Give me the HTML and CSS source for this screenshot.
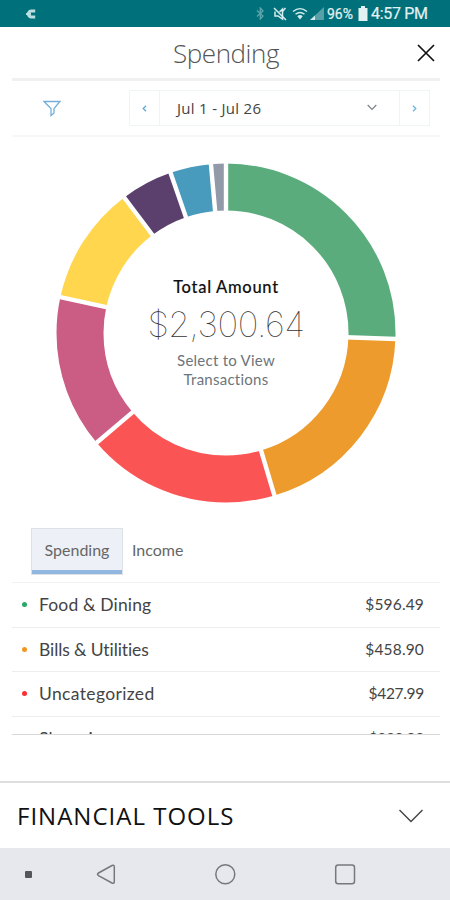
FILE: index.html
```html
<!DOCTYPE html>
<html lang="en">
<head>
<meta charset="utf-8">
<title>Spending</title>
<link rel="stylesheet" href="styles.css">
</head>
<body>
<div class="status">
  <svg class="carrier" width="12" height="12" viewBox="0 0 12 12"><path d="M10.200 3H6.500A3 3 0 0 0 6.500 9H10.200" fill="none" stroke="#b9dde0" stroke-width="3.200"/><path d="M1 6h5" stroke="#b9dde0" stroke-width="2"/></svg>
  <div class="indicators">
    <svg class="bt" width="9" height="13" viewBox="0 0 9 13"><path d="M1 3.5 7 9 4.3 12V1L7 4 1 9.5" fill="none" stroke="#5fa6ac" stroke-width="1.3"/></svg>
    <svg class="mute" width="14" height="14" viewBox="0 0 14 14"><path d="M2 4.500V9h3l4.500 3V2L6.500 5" fill="none" stroke="#d5ebed" stroke-width="1.500"/><path d="M1 1l12 12M12.500 1 9 5" stroke="#d5ebed" stroke-width="1.500"/></svg>
    <svg class="wifi" width="16" height="13" viewBox="0 0 16 13"><path d="M1 4.5Q8-1.2 15 4.5M3.5 7.3Q8 3.6 12.5 7.3" fill="none" stroke="#d5ebed" stroke-width="1.4"/><path d="M5.3 9.2Q8 7 10.700 9.200L8 12.500z" fill="#d5ebed"/></svg>
    <svg class="signal" width="14" height="13" viewBox="0 0 14 13"><path d="M0 13 14 0v13z" fill="#58a0a7"/><path d="M0 13 5 8.400V13z" fill="#d5ebed"/></svg>
    <span class="percent">96%</span>
    <svg class="battery" width="10" height="15" viewBox="0 0 10 15"><path d="M3 0h4v2h2.500v13h-9V2H3z" fill="#e2f1f2"/></svg>
    <span class="clock">4:57 PM</span>
  </div>
</div>
<header class="header">
  <h1>Spending</h1>
  <svg class="close" width="18" height="18" viewBox="0 0 18 18"><path d="M1 1 17 17M17 1 1 17" stroke="#111" stroke-width="1.7"/></svg>
</header>
<section class="filters">
  <svg class="funnel" width="18" height="17" viewBox="0 0 18 17"><path d="M1 1.500h16L11 8.500V13L8 15.500V8.500z" fill="none" stroke="#75afd9" stroke-width="1.300"/></svg>
  <div class="range">
    <div class="step"><svg width="5" height="7" viewBox="0 0 5 7"><path d="M4 .7 1.200 3.500 4 6.300" fill="none" stroke="#62a9da" stroke-width="1.300"/></svg></div>
    <div class="period"><span>Jul 1 - Jul 26</span><svg width="10" height="7" viewBox="0 0 10 7"><path d="M.7 1 5 5.500 9.300 1" fill="none" stroke="#7d8388" stroke-width="1.200"/></svg></div>
    <div class="step"><svg width="5" height="7" viewBox="0 0 5 7"><path d="M1 .7 3.800 3.500 1 6.300" fill="none" stroke="#6bb4dc" stroke-width="1.300"/></svg></div>
  </div>
</section>
<section class="chart">
  <svg class="donut" width="340" height="340" viewBox="-170 -170 340 340">
    <g class="slices" transform="rotate(-90)">
      <circle r="146" pathLength="360" stroke="#5aac7c" stroke-dasharray="92 268"/>
      <circle r="146" pathLength="360" stroke="#ed9b2d" stroke-dasharray="71.4 288.6" stroke-dashoffset="-92"/>
      <circle r="146" pathLength="360" stroke="#fb5455" stroke-dasharray="66.3 293.7" stroke-dashoffset="-163.4"/>
      <circle r="146" pathLength="360" stroke="#cb5c84" stroke-dasharray="52.5 307.5" stroke-dashoffset="-229.7"/>
      <circle r="146" pathLength="360" stroke="#ffd64d" stroke-dasharray="40.9 319.1" stroke-dashoffset="-282.2"/>
      <circle r="146" pathLength="360" stroke="#5b406d" stroke-dasharray="17.8 342.2" stroke-dashoffset="-323.1"/>
      <circle r="146" pathLength="360" stroke="#489bbc" stroke-dasharray="14 346" stroke-dashoffset="-340.9"/>
      <circle r="146" pathLength="360" stroke="#9299a8" stroke-dasharray="5.1 354.9" stroke-dashoffset="-354.9"/>
    </g>
    <g class="gaps">
      <path d="M0-120V-172"/>
      <path d="M0-120V-172" transform="rotate(92)"/>
      <path d="M0-120V-172" transform="rotate(163.400)"/>
      <path d="M0-120V-172" transform="rotate(229.700)"/>
      <path d="M0-120V-172" transform="rotate(282.200)"/>
      <path d="M0-120V-172" transform="rotate(323.100)"/>
      <path d="M0-120V-172" transform="rotate(340.900)"/>
      <path d="M0-120V-172" transform="rotate(354.900)"/>
    </g>
  </svg>
  <div class="summary">
    <div class="label">Total Amount</div>
    <div class="total">$2,300.64</div>
    <div class="hint">Select to View<br>Transactions</div>
  </div>
</section>
<nav class="tabs">
  <div class="tab active"><span>Spending</span></div>
  <div class="tab"><span>Income</span></div>
</nav>
<ul class="list">
  <li><i class="dot green"></i><span class="name">Food &amp; Dining</span><span class="amount">$596.49</span></li>
  <li><i class="dot orange"></i><span class="name tight">Bills &amp; Utilities</span><span class="amount">$458.90</span></li>
  <li><i class="dot red"></i><span class="name wide">Uncategorized</span><span class="amount narrow">$427.99</span></li>
  <li><i class="dot"></i><span class="name">Shopping</span><span class="amount narrow">$322.93</span></li>
</ul>
<section class="tools">
  <span>FINANCIAL TOOLS</span>
  <svg width="26" height="14" viewBox="0 0 26 14"><path d="M1.500 1 13 12.500 24.500 1" fill="none" stroke="#444" stroke-width="1.400"/></svg>
</section>
<footer class="navbar">
  <svg width="450" height="52" viewBox="0 0 450 52"><rect x="25" y="23" width="7" height="7" rx="1" fill="#55565b"/><g fill="none" stroke="#77787d" stroke-width="1.500"><path d="M98.500 25Q96.500 26.300 98.500 27.600L112 35Q114.300 36 114.300 33.500V19Q114.300 16.500 112 17.500z"/><circle cx="225.300" cy="26.300" r="9.500"/><rect x="335.700" y="17" width="18.800" height="18.800" rx="2.500"/></g></svg>
</footer>
</body>
</html>
```
FILE: styles.css
```css
* { box-sizing: border-box; }
body {
  margin: 0;
  width: 450px;
  height: 900px;
  overflow: hidden;
  display: flex;
  flex-direction: column;
  background: #fff;
  font-family: Lato, "Open Sans", sans-serif;
  color: #444;
}
svg { display: block; flex: none; }
.status {
  height: 27px;
  flex: none;
  background: #00717b;
  display: flex;
  align-items: center;
  justify-content: space-between;
  padding: 0 22px 0 25px;
  font-family: Roboto, sans-serif;
  color: #e2f1f2;
  white-space: nowrap;
}
.indicators { display: flex; align-items: center; height: 27px; }
.bt { margin-right: 8px; }
.mute { margin-right: 5px; }
.wifi { margin-right: 2px; }
.signal { margin-right: 3px; }
.percent { font-size: 14px; width: 31px; -webkit-text-stroke: 0.2px; }
.clock { font-size: 16px; width: 57px; margin-left: 3px; letter-spacing: -0.3px; -webkit-text-stroke: 0.2px; }
.header {
  height: 54px;
  flex: none;
  margin: 0 10px 0 12px;
  border-bottom: 3px solid #f0f0f0;
  display: grid;
  grid-template-columns: 1fr auto 1fr;
  align-items: center;
}
h1 {
  grid-column: 2;
  margin: 0;
  font: 300 26px/36px "Open Sans", sans-serif;
  letter-spacing: -0.45px;
  color: #555;
}
.close { justify-self: end; margin-right: 5px; }
.filters {
  height: 56px;
  flex: none;
  margin: 0 10px 0 12px;
  border-bottom: 2px solid #f6f7f8;
  display: flex;
  align-items: center;
  justify-content: space-between;
  padding: 0 10px 0 31px;
}
.range {
  width: 301px;
  height: 36px;
  border: 1px solid #eff4f6;
  display: flex;
}
.step { width: 29px; display: grid; place-items: center; }
.period {
  flex: 1;
  border: solid #eff4f6;
  border-width: 0 1px;
  display: flex;
  align-items: center;
  justify-content: space-between;
  padding: 0 22px 1px 17px;
  font: 15px "Open Sans", sans-serif;
  letter-spacing: 0.3px;
  color: #444;
}
.chart {
  height: 391px;
  flex: none;
  padding: 26px 0 0 56px;
  display: grid;
  align-items: start;
}
.donut, .summary { grid-area: 1 / 1; }
.slices { fill: none; stroke-width: 47; }
.gaps { stroke: #fff; stroke-width: 4.4; }
.summary { width: 340px; text-align: center; padding-top: 112px; }
.label { font: 500 16.5px/24px Lato, sans-serif; color: #111; letter-spacing: 0.7px; -webkit-text-stroke: 0.15px; }
.total { font: 100 35px/51px Inter, sans-serif; color: #333; letter-spacing: -0.5px; }
.hint { font: 15px/19px Lato, sans-serif; color: #6d757b; letter-spacing: 0.25px; padding-top: 1px; }
.tabs { height: 47px; flex: none; display: flex; padding-left: 31px; }
.tab {
  display: flex;
  align-items: center;
  height: 47px;
  padding: 0 9px 4px;
  font-size: 16px;
  color: #666;
}
.tab.active {
  width: 92px;
  padding: 0 0 4px;
  justify-content: center;
  background: #edf1f7;
  border: 1px solid #dce1e6;
  box-shadow: inset 0 -4px #91b6df;
}
.list {
  list-style: none;
  margin: 7px 10px 0 12px;
  padding: 0;
  height: 153px;
  flex: none;
  overflow: hidden;
  border-top: 1px solid #f1f2f3;
  border-bottom: 1px solid #d8d8d8;
}
.list li {
  height: 44.7px;
  border-bottom: 1px solid #eee;
  display: flex;
  align-items: center;
  padding: 0 16px 1px 10px;
}
.dot { width: 5px; height: 5px; border-radius: 50%; margin-right: 12px; }
.green { background: #27a768; }
.orange { background: #f29420; }
.red { background: #fb3036; }
.name { font-size: 17.5px; flex: 1; letter-spacing: 0.15px; }
.tight { letter-spacing: -0.1px; }
.wide { letter-spacing: 0.35px; }
.amount { font-size: 15.5px; letter-spacing: 0.15px; padding-bottom: 1px; }
.narrow { letter-spacing: -0.3px; }
.tools {
  height: 67px;
  flex: none;
  margin-top: 46px;
  border-top: 2px solid #dedede;
  display: flex;
  align-items: center;
  justify-content: space-between;
  padding: 0 26px 0 17px;
  font: 24px "Open Sans", sans-serif;
  letter-spacing: 1px;
  color: #111;
}
.navbar { height: 52px; flex: none; background: #e7e8ed; }
```
